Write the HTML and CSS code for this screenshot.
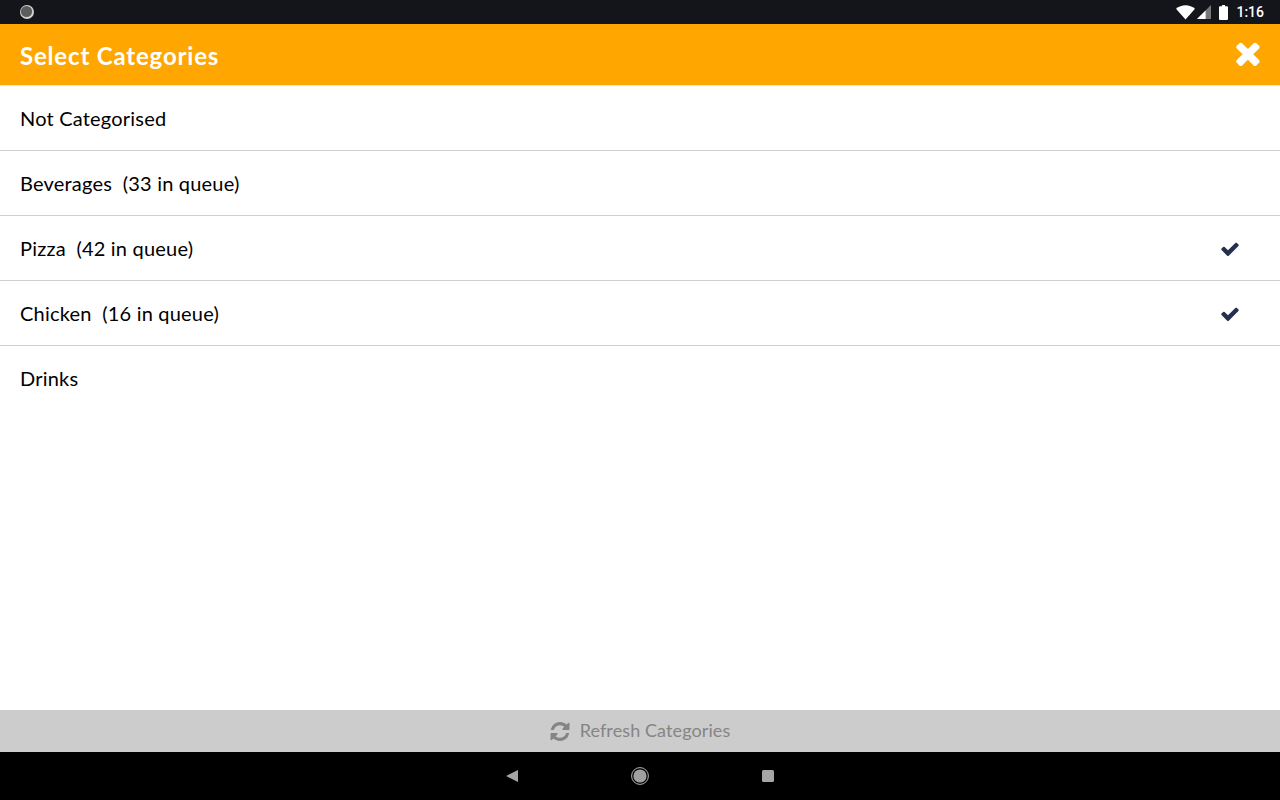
FILE: index.html
```html
<!DOCTYPE html>
<html lang="en">
<head>
<meta charset="utf-8">
<title>Select Categories</title>
<link rel="stylesheet" href="styles.css">
</head>
<body>
<div class="app">
  <div class="status">
    <svg class="status-dot" width="14" height="14" viewBox="0 0 14 14"><circle cx="7" cy="7" r="7" fill="#d0d0d0"/><circle cx="6.5" cy="6.5" r="5.6" fill="#5c5c5c"/></svg>
    <div class="status-right">
      <svg width="19" height="15" viewBox="0 0 19 15"><path d="M0 3.8 C5.2 -1 13.8 -1 19 3.8 L9.5 14.6 Z" fill="#fff"/></svg>
      <svg class="sig" width="14" height="14" viewBox="0 0 14 14"><path d="M14 0 V14 H0 Z" fill="#777"/><path d="M8.6 5.4 V14 H0 Z" fill="#fff"/></svg>
      <svg class="batt" width="9" height="15" viewBox="0 0 9 15"><path d="M3 0 H6 V1.2 H8 Q9 1.2 9 2.2 V14 Q9 15 8 15 H1 Q0 15 0 14 V2.2 Q0 1.2 1 1.2 H3 Z" fill="#fff"/></svg>
      <span class="clock">1:16</span>
    </div>
  </div>
  <header class="head">
    <h1 class="title">Select Categories</h1>
    <svg class="close" width="25" height="25" viewBox="262 282 1228 1272"><path d="M1490 1322q0 40-28 68l-136 136q-28 28-68 28t-68-28l-294-294-294 294q-28 28-68 28t-68-28l-136-136q-28-28-28-68t28-68l294-294-294-294q-28-28-28-68t28-68l136-136q28-28 68-28t68 28l294 294 294-294q28-28 68-28t68 28l136 136q28 28 28 68t-28 68l-294 294 294 294q28 28 28 68z" fill="#fff"/></svg>
  </header>
  <main class="list">
    <div class="row"><span>Not Categorised</span></div>
    <div class="row"><span>Beverages&nbsp; (33 in queue)</span></div>
    <div class="row"><span>Pizza&nbsp; (42 in queue)</span>
      <svg class="check" width="18" height="14" viewBox="121 282 1550 1240"><path d="M1671 566q0 40-28 68l-724 724-136 136q-28 28-68 28t-68-28l-136-136-362-362q-28-28-28-68t28-68l136-136q28-28 68-28t68 28l294 295 656-657q28-28 68-28t68 28l136 136q28 28 28 68z" fill="#25304f"/></svg></div>
    <div class="row"><span>Chicken&nbsp; (16 in queue)</span>
      <svg class="check" width="18" height="14" viewBox="121 282 1550 1240"><path d="M1671 566q0 40-28 68l-724 724-136 136q-28 28-68 28t-68-28l-136-136-362-362q-28-28-28-68t28-68l136-136q28-28 68-28t68 28l294 295 656-657q28-28 68-28t68 28l136 136q28 28 28 68z" fill="#25304f"/></svg></div>
    <div class="row last"><span>Drinks</span></div>
  </main>
  <div class="refresh">
    <svg width="20" height="19" viewBox="128 128 1536 1536"><path d="M1639 1056q0 5-1 7-64 268-268 434.5t-478 166.5q-146 0-282.5-55t-243.5-157l-129 129q-19 19-45 19t-45-19-19-45v-448q0-26 19-45t45-19h448q26 0 45 19t19 45-19 45l-137 137q71 66 161 102t187 36q134 0 250-65t186-179q11-17 53-117 8-23 30-23h192q13 0 22.5 9.5t9.5 22.5zm25-800v448q0 26-19 45t-45 19h-448q-26 0-45-19t-19-45 19-45l138-138q-148-137-349-137-134 0-250 65t-186 179q-11 17-53 117-8 23-30 23h-199q-13 0-22.5-9.5t-9.5-22.5v-7q65-268 270-434.5t480-166.5q146 0 284 55.5t245 156.5l130-129q19-19 45-19t45 19 19 45z" fill="#858585"/></svg>
    <span class="refresh-label">Refresh Categories</span>
  </div>
  <nav class="nav">
    <svg width="14" height="14" viewBox="0 0 14 14"><path d="M13 1 V13 L1 7 Z" fill="#a6a6a6"/></svg>
    <svg width="18" height="18" viewBox="0 0 18 18"><circle cx="9" cy="9" r="8.4" fill="none" stroke="#b5b5b5" stroke-width="1"/><circle cx="9" cy="9" r="6.6" fill="#a0a0a0"/></svg>
    <svg width="14" height="14" viewBox="0 0 14 14"><rect x="1" y="1" width="12" height="12" rx="1.5" fill="#a6a6a6"/></svg>
  </nav>
</div>
</body>
</html>
```
FILE: styles.css
```css
html, body {
  margin: 0;
  padding: 0;
}
.app {
  display: flex;
  flex-direction: column;
  width: 1280px;
  height: 800px;
  overflow: hidden;
  background: #fff;
  font-family: "Lato", "Open Sans", sans-serif;
}
.status {
  flex: 0 0 24px;
  display: flex;
  align-items: center;
  justify-content: space-between;
  padding: 0 16px 0 20px;
  background: #14151a;
}
.status-right {
  display: flex;
  align-items: center;
}
.sig { margin-left: 2px; }
.batt { margin-left: 8px; }
.clock {
  margin-left: 8px;
  color: #fff;
  font: 500 14px "Roboto", sans-serif;
}
.head {
  flex: 0 0 61px;
  display: flex;
  align-items: center;
  justify-content: space-between;
  padding: 0 20px;
  background: #ffa700;
  border-bottom: 1px solid #e6e6e6;
}
.title {
  margin: 2px 0 0;
  color: #fff;
  font-size: 24px;
  font-weight: 700;
  letter-spacing: 0.82px;
}
.close { margin-bottom: 2px; }
.list {
  flex: 1 1 auto;
}
.row {
  height: 64px;
  display: flex;
  align-items: center;
  justify-content: space-between;
  padding: 0 41px 0 20px;
  border-bottom: 1px solid #cfcfcf;
  color: #000;
  font-size: 20px;
  letter-spacing: 0.2px;
}
.row.last { border-bottom: 0; }
.check { margin-top: 2px; }
.refresh {
  flex: 0 0 42px;
  display: flex;
  align-items: center;
  justify-content: center;
  gap: 10px;
  background: #cccccc;
  color: #858585;
  font-size: 18px;
}
.refresh-label {
  margin-bottom: 2px;
  letter-spacing: 0.1px;
}
.nav {
  flex: 0 0 48px;
  display: flex;
  align-items: center;
  justify-content: center;
  gap: 112px;
  background: #000;
}
```
